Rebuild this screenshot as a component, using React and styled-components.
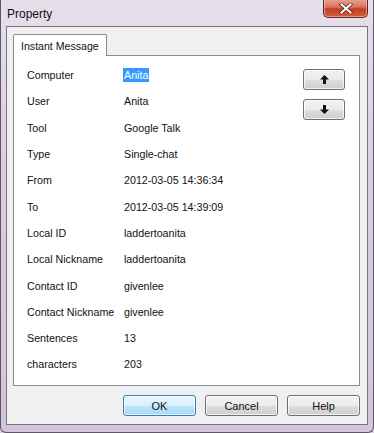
import React from 'react';
import styled, { createGlobalStyle } from 'styled-components';

const GlobalStyle = createGlobalStyle`
  html, body {
    margin: 0;
    padding: 0;
    background: #d8cfe0;
  }
  * { box-sizing: border-box; }
`;

const Window = styled.div`
  width: 374px;
  height: 433px;
  display: flex;
  flex-direction: column;
  background: linear-gradient(180deg, #e6dfeb 0%, #d9cde2 40%, #d3c4dc 100%);
  border: 1px solid #5d5668;
  border-top: none;
  border-radius: 0 0 6px 6px;
  font-family: 'Liberation Sans', Arial, sans-serif;
`;

const TitleBar = styled.div`
  height: 27px;
  display: flex;
  justify-content: space-between;
  align-items: flex-start;
  padding: 0 5px 0 6px;
`;

const Title = styled.span`
  font-family: 'Liberation Sans', Arial, sans-serif;
  font-size: 12px;
  color: #111;
  margin-top: 7px;
`;

const CloseButton = styled.div`
  width: 45px;
  height: 19px;
  margin-top: -1px;
  border: 1px solid #5b2a24;
  border-top: none;
  border-radius: 0 0 5px 5px;
  background: linear-gradient(180deg, #e9a593 0%, #d8735f 45%, #c33f25 55%, #d25c3e 100%);
  box-shadow: inset 0 0 0 1px rgba(255, 210, 200, 0.5);
  display: flex;
  align-items: center;
  justify-content: center;
`;

const Client = styled.div`
  flex: 1;
  margin: 0 5px 7px 5px;
  background: #f0f0f0;
  border: 1px solid #7a7482;
  display: flex;
  flex-direction: column;
  padding: 7px 7px 8px 6px;
`;

const TabStrip = styled.div`
  display: flex;
  height: 21px;
  position: relative;
  z-index: 1;
`;

const Tab = styled.div`
  height: 22px;
  padding: 0 7px 0 7px;
  background: #ffffff;
  border: 1px solid #898c95;
  border-bottom: none;
  border-radius: 2px 2px 0 0;
  font-size: 10.6px;
  color: #111;
  display: flex;
  align-items: center;
`;

const TabPanel = styled.div`
  height: 331px;
  background: #ffffff;
  border: 1px solid #898c95;
  display: flex;
  align-items: flex-start;
  padding: 6px 14px 0 13px;
`;

const Fields = styled.div`
  flex: 1;
  display: flex;
  flex-direction: column;
`;

const Row = styled.div`
  height: 26.3px;
  display: grid;
  grid-template-columns: 97px 1fr;
  align-items: center;
  font-size: 10.7px;
  color: #111;
`;

const Value = styled.span`
  justify-self: start;
  padding: 1px 1px;
  margin-left: -1px;
  background: ${p => (p.$selected ? '#3399ff' : 'transparent')};
  color: ${p => (p.$selected ? '#ffffff' : '#111')};
`;

const SideButtons = styled.div`
  display: flex;
  flex-direction: column;
  gap: 9px;
  padding-top: 7px;
`;

const Button = styled.button`
  width: ${p => p.$w}px;
  height: 21px;
  padding: 0;
  border-radius: 3px;
  border: 1px solid ${p => (p.$default ? '#3c7fb1' : '#707070')};
  background: ${p =>
    p.$default
      ? 'linear-gradient(180deg, #eaf6fd 0%, #d9f0fc 50%, #bee6fd 51%, #a7d9f5 100%)'
      : 'linear-gradient(180deg, #f2f2f2 0%, #ebebeb 50%, #dddddd 51%, #cfcfcf 100%)'};
  box-shadow: inset 0 0 0 1px rgba(255, 255, 255, 0.7);
  font-family: 'Liberation Sans', Arial, sans-serif;
  font-size: 11px;
  color: #111;
  display: flex;
  align-items: center;
  justify-content: center;
`;

const ButtonRow = styled.div`
  display: flex;
  justify-content: flex-end;
  gap: 9px;
  margin-top: 9px;
`;

const rows = [
  ['Computer', 'Anita', true],
  ['User', 'Anita'],
  ['Tool', 'Google Talk'],
  ['Type', 'Single-chat'],
  ['From', '2012-03-05 14:36:34'],
  ['To', '2012-03-05 14:39:09'],
  ['Local ID', 'laddertoanita'],
  ['Local Nickname', 'laddertoanita'],
  ['Contact ID', 'givenlee'],
  ['Contact Nickname', 'givenlee'],
  ['Sentences', '13'],
  ['characters', '203'],
];

const Arrow = ({ down }) => (
  <svg width="9" height="9" viewBox="0 0 9 9" style={down ? { transform: 'rotate(180deg)' } : undefined}>
    <path d="M4.5 0 L9 4.5 L6 4.5 L6 9 L3 9 L3 4.5 L0 4.5 Z" fill="#111" />
  </svg>
);

const CloseGlyph = () => (
  <svg width="14" height="11" viewBox="0 0 14 11">
    <path d="M2.5 1.5 L11.5 9.5 M11.5 1.5 L2.5 9.5" stroke="#5a2a24" strokeWidth="3.6" strokeLinecap="square" />
    <path d="M2.5 1.5 L11.5 9.5 M11.5 1.5 L2.5 9.5" stroke="#ffffff" strokeWidth="2" strokeLinecap="square" />
  </svg>
);

export default function App() {
  return (
    <>
      <GlobalStyle />
      <Window>
        <TitleBar>
          <Title>Property</Title>
          <CloseButton>
            <CloseGlyph />
          </CloseButton>
        </TitleBar>
        <Client>
          <TabStrip>
            <Tab>Instant Message</Tab>
          </TabStrip>
          <TabPanel>
            <Fields>
              {rows.map(([label, value, selected]) => (
                <Row key={label}>
                  <span>{label}</span>
                  <Value $selected={selected}>{value}</Value>
                </Row>
              ))}
            </Fields>
            <SideButtons>
              <Button $w={42}>
                <Arrow />
              </Button>
              <Button $w={42}>
                <Arrow down />
              </Button>
            </SideButtons>
          </TabPanel>
          <ButtonRow>
            <Button $w={73} $default>OK</Button>
            <Button $w={73}>Cancel</Button>
            <Button $w={73}>Help</Button>
          </ButtonRow>
        </Client>
      </Window>
    </>
  );
}
